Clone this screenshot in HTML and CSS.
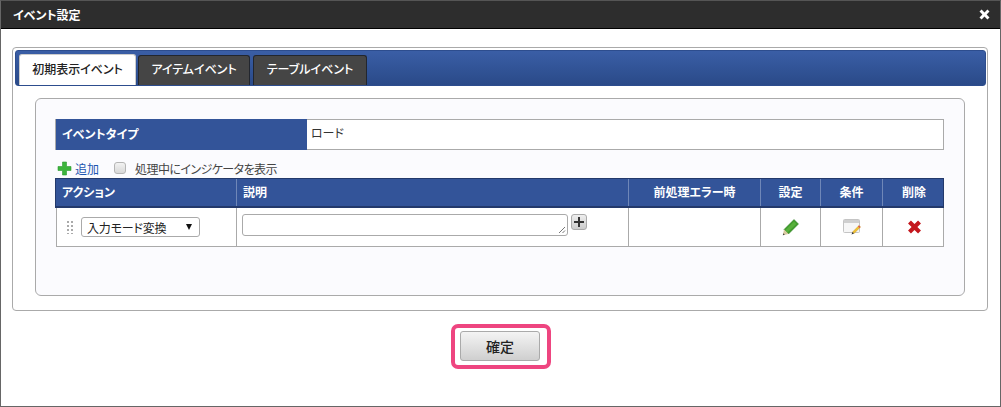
FILE: index.html
```html
<!DOCTYPE html>
<html lang="ja">
<head>
<meta charset="utf-8">
<title>イベント設定</title>
<link rel="stylesheet" href="styles.css">
</head>
<body>
<div class="dialog">
  <header class="titlebar">
    <span class="title">イベント設定</span>
    <svg class="close" width="11" height="11" viewBox="0 0 11 11"><path d="M2.600 0.500 5.500 3.400 8.400 0.500 10.500 2.600 7.600 5.500 10.500 8.400 8.400 10.500 5.500 7.600 2.600 10.500 0.500 8.400 3.400 5.500 0.500 2.600Z" fill="#fff"/></svg>
  </header>
  <main class="content">
    <section class="panel">
      <nav class="tabbar">
        <span class="tab tab-active">初期表示イベント</span>
        <span class="tab tab-two">アイテムイベント</span>
        <span class="tab tab-three">テーブルイベント</span>
      </nav>
      <div class="inner">
        <div class="event-type">
          <div class="event-label">イベントタイプ</div>
          <div class="event-value">ロード</div>
        </div>
        <div class="tools">
          <svg class="plus" width="15" height="15" viewBox="0 0 15 15"><path d="M5.500 1h4v4.500H14v4H9.500V14h-4V9.500H1v-4h4.500Z" fill="#3cb43c" stroke="#2c9a30" stroke-width=".6"/></svg>
          <a class="add">追加</a>
          <span class="check"></span>
          <span class="check-label">処理中にインジケータを表示</span>
        </div>
        <div class="grid grid-head">
          <div class="th th-left">アクション</div>
          <div class="th th-left">説明</div>
          <div class="th">前処理エラー時</div>
          <div class="th">設定</div>
          <div class="th">条件</div>
          <div class="th th-last">削除</div>
        </div>
        <div class="grid grid-row">
          <div class="td td-action">
            <span class="drag"></span>
            <div class="select"><span>入力モード変換</span><i class="arrow"></i></div>
          </div>
          <div class="td td-desc">
            <div class="textarea">
              <svg class="grip" width="8" height="8" viewBox="0 0 8 8"><path d="M7 1 1 7M7 4.500 4.500 7" stroke="#777" fill="none"/></svg>
            </div>
            <div class="plus-btn"><svg width="10" height="10" viewBox="0 0 10 10"><path d="M4 0h2v4h4v2H6v4H4V6H0V4h4Z" fill="#333"/></svg></div>
          </div>
          <div class="td"></div>
          <div class="td td-icon">
            <svg width="17" height="17" viewBox="0 0 17 17"><path d="M12 .5 16.500 5 6.500 15 2 10.500Z" fill="#3f9a2c" stroke="#2f7d20" stroke-width=".5"/><path d="M12 2.500 14.500 5 5 14 3.500 11Z" fill="#58b03c"/><path d="M2 10.500 6.500 15 .8 16.200Z" fill="#d9c9a0"/><path d="M.8 16.200l2-.5-1.500-1.500Z" fill="#444"/></svg>
          </div>
          <div class="td td-icon">
            <svg width="18" height="16" viewBox="0 0 18 16"><rect x=".5" y=".5" width="16" height="13" rx="1" fill="#f6f6f6" stroke="#c4c4c4"/><rect x="1" y="1" width="15" height="3" fill="#cfcfcf"/><path d="M16 6.500 17.500 8 11 14.500 9.500 13Z" fill="#f2c230" stroke="#b88a10" stroke-width=".4"/><path d="M16 6.500 17.500 8 16.500 9 15 7.500Z" fill="#d9534f"/><path d="M9.500 13 11 14.500 8.500 15.500Z" fill="#333"/></svg>
          </div>
          <div class="td td-icon td-last">
            <svg width="15" height="14" viewBox="0 0 13 13"><path d="M3.200 .5 6.500 3.800 9.800 .5 12.500 3.200 9.200 6.500 12.500 9.800 9.800 12.500 6.500 9.200 3.200 12.500 .5 9.800 3.800 6.500 .5 3.200Z" fill="#c4161c"/></svg>
          </div>
        </div>
      </div>
    </section>
    <div class="actions">
      <div class="highlight"><button class="confirm" type="button">確定</button></div>
    </div>
  </main>
</div>
</body>
</html>
```
FILE: styles.css
```css
* { box-sizing: border-box; }
html, body { margin: 0; padding: 0; }
body {
  width: 1001px;
  height: 407px;
  overflow: hidden;
  background: #fff;
  font-family: "Noto Sans CJK JP", "Liberation Sans", sans-serif;
  font-size: 12px;
  font-feature-settings: "palt";
  color: #333;
}
.dialog {
  width: 1001px;
  height: 407px;
  border: 1px solid #666;
  border-top-color: #555;
  display: flex;
  flex-direction: column;
}
.titlebar {
  height: 28px;
  flex: none;
  background: #2d2d2d;
  border-bottom: 1px solid #000;
  color: #fff;
  display: flex;
  align-items: center;
  justify-content: space-between;
  padding: 0 10px 0 12px;
}
.title { font-size: 12px; font-weight: 700; line-height: 26px; }
.content { flex: 1; padding: 18px 12px 0 11px; }
.panel {
  width: 976px;
  height: 264px;
  border: 1px solid #aaa;
  border-radius: 4px;
  padding: 2px 1px 0 2px;
}
.tabbar {
  height: 36px;
  background: linear-gradient(#3a5ea6, #2a4a88);
  border-radius: 3px;
  border: 1px solid #2d4d8e;
  display: flex;
  align-items: flex-end;
  padding: 0 0 0 3px;
}
.tab {
  height: 30px;
  background: #454545;
  border: 1px solid #22262e;
  border-bottom: 0;
  border-radius: 3px 3px 0 0;
  color: #fff;
  font-size: 12px;
  font-weight: 500;
  line-height: 26px;
  text-align: center;
}
.tab-active {
  width: 117px;
  height: 31px;
  background: #fff;
  color: #222;
  border-color: #ccc;
  line-height: 27px;
}
.tab-two { width: 112px; margin-left: 2px; }
.tab-three { width: 114px; margin-left: 3px; }
.inner {
  width: 930px;
  height: 198px;
  margin: 12px 0 0 20px;
  border: 1px solid #aaa;
  border-radius: 6px;
  background: #fbfbfe;
  padding: 20px 19px 0 19px;
}
.event-type {
  width: 889px;
  height: 31px;
  display: flex;
  border: 1px solid #aaa;
  background: #fff;
}
.event-label {
  width: 251px;
  background: #335499;
  color: #fff;
  font-weight: 700;
  margin: -1px 0;
  padding-left: 6px;
  line-height: 29px;
}
.event-value { padding-left: 4px; line-height: 26px; }
.tools {
  height: 28px;
  display: flex;
  align-items: center;
  padding: 8px 0 0 2px;
  font-size: 12px;
}
.plus { flex: none; }
.add { color: #1d55b0; margin-left: 3px; }
.check {
  width: 12px;
  height: 12px;
  margin-left: 15px;
  border: 1px solid #b5b5b5;
  border-radius: 3px;
  background: linear-gradient(#f2f2f2, #d8d8d8);
}
.check-label { margin-left: 9px; color: #444; letter-spacing: -.55px; }
.grid {
  width: 889px;
  display: grid;
  grid-template-columns: 181px 392px 132px 60px 62px 62px;
}
.grid-head {
  height: 30px;
  background: #335499;
  border: 1px solid #23396b;
  border-bottom-width: 2px;
}
.th {
  color: #fff;
  font-weight: 700;
  text-align: center;
  line-height: 26px;
  border-right: 1px solid #6f87b8;
}
.th-left { text-align: left; padding-left: 6px; }
.th-last { border-right: 0; }
.grid-row {
  height: 39px;
  margin-left: 1px;
  width: 888px;
  grid-template-columns: 180px 392px 132px 60px 62px 62px;
  border: 1px solid #aaa;
  border-top: 0;
  background: #fff;
}
.td { border-right: 1px solid #aaa; min-width: 0; }
.td-last { border-right: 0; }
.td-action {
  display: flex;
  align-items: center;
  padding-left: 9px;
}
.drag {
  width: 7px;
  height: 14px;
  background-image: radial-gradient(circle, #aaa 1.2px, transparent 1.3px);
  background-size: 4px 4px;
}
.select {
  width: 119px;
  height: 20px;
  margin-left: 8px;
  border: 1px solid #aaa;
  border-radius: 3px;
  background: #fff;
  color: #222;
  display: flex;
  align-items: center;
  justify-content: space-between;
  padding: 0 7px 0 5px;
}
.select span { letter-spacing: -.2px; }
.arrow {
  width: 0;
  height: 0;
  border-left: 3.500px solid transparent;
  border-right: 3.500px solid transparent;
  border-top: 6px solid #111;
}
.td-desc { display: flex; align-items: flex-start; padding: 6px 0 0 5px; }
.textarea {
  width: 326px;
  height: 22px;
  border: 1px solid #aaa;
  border-radius: 3px;
  background: #fff;
  position: relative;
}
.grip { position: absolute; right: 1px; bottom: 1px; }
.plus-btn {
  width: 16px;
  height: 16px;
  margin-left: 3px;
  border: 1px solid #aaa;
  border-radius: 3px;
  background: linear-gradient(#eee, #ccc);
  display: flex;
  align-items: center;
  justify-content: center;
}
.td-icon { display: flex; align-items: center; justify-content: center; }
.actions { display: flex; justify-content: center; padding: 13px 0 0 2px; }
.highlight {
  width: 100px;
  height: 45px;
  border: 4px solid #ee4580;
  border-radius: 7px;
  padding: 3px 5px;
}
.confirm {
  display: block;
  width: 80px;
  height: 30px;
  padding: 0;
  border: 1px solid #aaa;
  border-radius: 3px;
  background: linear-gradient(#f4f4f4, #cfcfcf);
  color: #222;
  font: 500 14px "Noto Sans CJK JP", sans-serif;
}
```
